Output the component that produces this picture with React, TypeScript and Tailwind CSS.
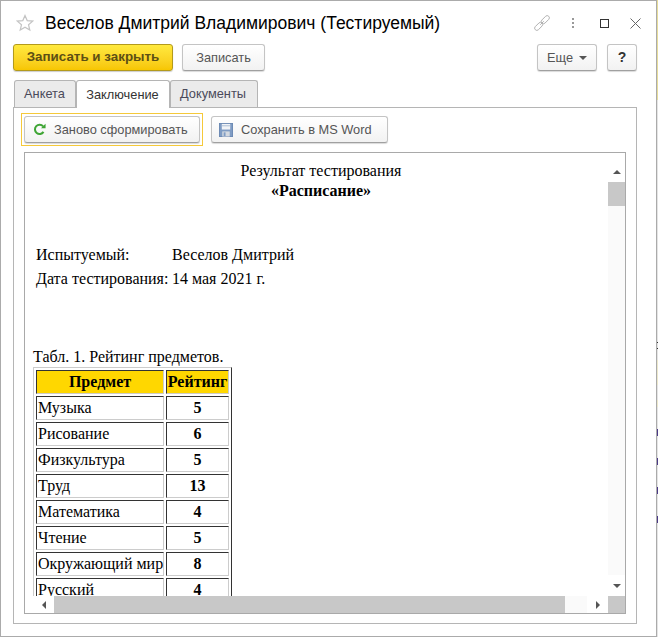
import React from "react";

const rows: [string, string][] = [
  ["Музыка", "5"],
  ["Рисование", "6"],
  ["Физкультура", "5"],
  ["Труд", "13"],
  ["Математика", "4"],
  ["Чтение", "5"],
  ["Окружающий мир", "8"],
  ["Русский", "4"],
];

const btn =
  "flex h-[27px] items-center justify-center rounded-[3px] border border-[#c4c4c4] border-b-[#a0a0a0] bg-gradient-to-b from-white to-[#f2f2f2] text-[12.8px] text-[#555] shadow-[0_1px_1px_rgba(0,0,0,0.15)]";
const cell = "border border-solid border-t-[#333] border-l-[#333] border-r-[#ccc] border-b-[#ccc] p-0 h-[24px] leading-[22px]";

function Star() {
  return (
    <svg width="18" height="18" viewBox="0 0 18 18" fill="none" stroke="#c4c4c4" strokeWidth="1.2">
      <path d="M9 1.5l2.2 5.1 5.5.5-4.2 3.6 1.3 5.4L9 13.2l-4.8 2.9 1.3-5.4L1.3 7.1l5.5-.5z" />
    </svg>
  );
}

function Reload() {
  return (
    <svg width="13" height="13" viewBox="0 0 14 14" fill="none">
      <path d="M11.3 9.6A5 5 0 1 1 10.9 3.6" stroke="#3fa535" strokeWidth="2.2" />
      <path d="M8.6 5.6h4.9V.8z" fill="#3fa535" />
    </svg>
  );
}

function Floppy() {
  return (
    <svg width="14" height="14" viewBox="0 0 15 15">
      <rect x="0.5" y="0.5" width="14" height="14" fill="#7f9cc4" stroke="#6a88b2" />
      <rect x="3" y="1" width="9" height="6" fill="#f2f4f7" />
      <rect x="3" y="2.5" width="9" height="1" fill="#a9bbd2" />
      <rect x="3.5" y="9" width="8" height="5.5" fill="#d4d9e0" />
      <rect x="5" y="10" width="2" height="4" fill="#7f9cc4" />
    </svg>
  );
}

function LinkIcon() {
  return (
    <svg width="16" height="16" viewBox="0 0 16 16" fill="none" stroke="#adadad" strokeWidth="0.9">
      <g transform="rotate(-45 8 8)">
        <rect x="-1.5" y="5.8" width="9.5" height="4.4" rx="2.2" />
        <rect x="8" y="5.8" width="9.5" height="4.4" rx="2.2" />
        <path d="M5.5 8h5" />
      </g>
    </svg>
  );
}

function Arrow({ dir }: { dir: "up" | "down" | "left" | "right" }) {
  const d = {
    up: "M0 4L4 0l4 4z",
    down: "M0 0h8L4 4z",
    left: "M4 0v8L0 4z",
    right: "M0 0v8l4-4z",
  }[dir];
  const vertical = dir === "up" || dir === "down";
  return (
    <svg width={vertical ? 8 : 4} height={vertical ? 4 : 8} viewBox={vertical ? "0 0 8 4" : "0 0 4 8"}>
      <path d={d} fill="#555" />
    </svg>
  );
}

export default function App() {
  return (
    <div className="flex h-[637px] w-[658px] overflow-hidden bg-white font-['Liberation_Sans',Arial,sans-serif]">
      <div className="flex h-[637px] w-[657px] shrink-0 flex-col border border-[#ababab] bg-white">
        {/* title */}
        <div className="flex h-[43px] shrink-0 items-center pt-[1px]">
          <div className="ml-[15px] w-[29px]">
            <Star />
          </div>
          <h1 className="text-[17.5px] leading-[22px] text-black">Веселов Дмитрий Владимирович (Тестируемый)</h1>
          <div className="ml-auto flex items-center">
            <LinkIcon />
            <div className="ml-[22px] flex flex-col gap-[2px]">
              <span className="h-[2px] w-[2px] bg-[#999]" />
              <span className="h-[2px] w-[2px] bg-[#999]" />
              <span className="h-[2px] w-[2px] bg-[#999]" />
            </div>
            <div className="ml-[26px] h-[9px] w-[9px] border border-[#333]" />
            <svg className="ml-[21px] mr-[15px]" width="11" height="11" viewBox="0 0 11 11" stroke="#666" strokeWidth="1">
              <path d="M.5.5l10 10M10.5.5l-10 10" />
            </svg>
          </div>
        </div>

        {/* command bar */}
        <div className="flex h-[27px] shrink-0 items-center pl-[12px] pr-[19px]">
          <button className="flex h-[27px] w-[160px] items-center justify-center rounded-[3px] border border-[#b39a1c] bg-gradient-to-b from-[#ffe93d] to-[#f7c600] text-[13.4px] font-bold text-[#5c4f14] shadow-[0_1px_1px_rgba(0,0,0,0.2)]">
            Записать и закрыть
          </button>
          <button className={`${btn} ml-[9px] w-[83px]`}>Записать</button>
          <button className={`${btn} ml-auto w-[60px] gap-[6px]`}>
            Еще
            <Arrow dir="down" />
          </button>
          <button className={`${btn} ml-[10px] w-[30px] !text-[14px] font-bold !text-[#333]`}>?</button>
        </div>

        {/* tabs */}
        <div className="z-10 mt-[9px] flex h-[27px] shrink-0 items-start pl-[13px] text-[12.8px]">
          <div className="flex h-[27px] w-[62px] items-center justify-center rounded-t-[3px] border border-b-0 border-[#b5b5b5] bg-[#ebebeb] pr-[1px] text-[#4a4a5a]">Анкета</div>
          <div className="flex h-[28px] w-[94px] items-center justify-center rounded-t-[3px] border border-b-0 border-[#b5b5b5] bg-white pr-[1px] text-[#333]">Заключение</div>
          <div className="flex h-[27px] w-[88px] items-center justify-center rounded-t-[3px] border border-b-0 border-[#b5b5b5] bg-[#ebebeb] pr-[2px] text-[#4a4a5a]">Документы</div>
        </div>

        {/* tab panel */}
        <div className="ml-[12px] flex h-[517px] w-[624px] shrink-0 flex-col border border-[#b5b5b5] px-[7px]">
          <div className="mt-[5px] flex h-[33px] shrink-0 items-center">
            <div className="border border-[#f5c93a] p-[2px]">
              <button className={`${btn} w-[176px] !justify-start gap-[8px] pl-[8px]`}>
                <Reload />
                Заново сформировать
              </button>
            </div>
            <button className={`${btn} ml-[8px] w-[177px] !justify-start gap-[8px] pl-[7px]`}>
              <Floppy />
              Сохранить в MS Word
            </button>
          </div>

          {/* report */}
          <div className="ml-[3px] mt-[6px] flex h-[462px] w-[602px] flex-col border border-[#a9a9a9]">
            <div className="flex min-h-0 flex-1">
              <div className="min-w-0 flex-1 overflow-hidden">
                <div className="w-[592px] font-['Liberation_Serif','Times_New_Roman',serif] text-[16px] text-black">
                  <div className="pt-[8px] text-center leading-[20px]">
                    <p>Результат тестирования</p>
                    <p className="font-bold">«Расписание»</p>
                  </div>
                  <div className="mt-[42px] pl-[11px] leading-[24px]">
                    <div className="flex">
                      <span className="w-[136px]">Испытуемый:</span>
                      <span>Веселов Дмитрий</span>
                    </div>
                    <div className="flex">
                      <span className="w-[136px]">Дата тестирования:</span>
                      <span>14 мая 2021 г.</span>
                    </div>
                  </div>
                  <p className="mt-[56px] pl-[8px] leading-[20px]">Табл. 1. Рейтинг предметов.</p>
                  <table className="ml-[8px] w-[199px] table-fixed border-separate border-spacing-[2px] border border-solid border-t-[#ccc] border-l-[#ccc] border-r-[#333] border-b-[#333]">
                    <colgroup>
                      <col className="w-[128px]" />
                      <col className="w-[63px]" />
                    </colgroup>
                    <thead>
                      <tr>
                        <th className={`${cell} bg-[#ffd700]`}>Предмет</th>
                        <th className={`${cell} bg-[#ffd700]`}>Рейтинг</th>
                      </tr>
                    </thead>
                    <tbody>
                      {rows.map(([name, score]) => (
                        <tr key={name}>
                          <td className={`${cell} whitespace-nowrap pl-[1px]`}>{name}</td>
                          <td className={`${cell} text-center font-bold`}>{score}</td>
                        </tr>
                      ))}
                    </tbody>
                  </table>
                </div>
              </div>
              {/* vertical scrollbar */}
              <div className="flex w-[17px] shrink-0 flex-col">
                <div className="flex h-[29px] items-center justify-center pt-[8px]">
                  <Arrow dir="up" />
                </div>
                <div className="h-[24px] bg-[#c8c8c8]" />
                <div className="flex-1 bg-[#fafafa]" />
                <div className="flex h-[21px] items-center justify-center">
                  <Arrow dir="down" />
                </div>
              </div>
            </div>
            {/* horizontal scrollbar */}
            <div className="flex h-[17px] shrink-0">
              <div className="flex w-[29px] items-center justify-center pl-[8px]">
                <Arrow dir="left" />
              </div>
              <div className="w-[511px] bg-[#c8c8c8]" />
              <div className="w-[22px] bg-[#fafafa]" />
              <div className="flex w-[21px] items-center justify-center">
                <Arrow dir="right" />
              </div>
              <div className="w-[17px] bg-[#c8c8c8]" />
            </div>
          </div>
        </div>
      </div>

      {/* edge of the window behind */}
      <div className="flex w-[1px] shrink-0 flex-col bg-[#e4e4e4]">
        <div className="h-[100px] bg-[#e6dc9a]" />
        <div className="mt-[242px] h-[1px] bg-[#333]" />
        <div className="mt-[5px] h-[1px] bg-[#333]" />
        <div className="mt-[11px] h-[25px] bg-[#ece8cc]" />
        <div className="mt-[15px] h-[7px] bg-[#ece8cc]" />
        <div className="mt-[22px] h-[7px] bg-[#4b3a86]" />
        <div className="mt-[22px] h-[7px] bg-[#4b3a86]" />
        <div className="mt-[22px] h-[7px] bg-[#4b3a86]" />
        <div className="mt-[22px] h-[7px] bg-[#4b3a86]" />
      </div>
    </div>
  );
}
